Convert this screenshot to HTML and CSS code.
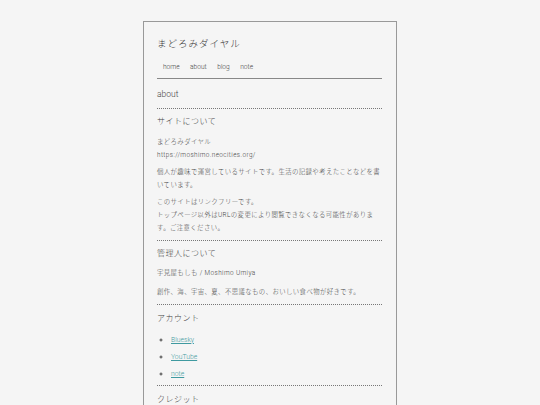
FILE: index.html
```html
<!DOCTYPE html>
<html lang="ja">
<head>
<meta charset="utf-8">
<title>まどろみダイヤル</title>
<link rel="stylesheet" href="styles.css">
</head>
<body>
<div class="page">
  <header class="site-header">
    <h1 class="site-title">まどろみダイヤル</h1>
    <nav class="nav">
      <a href="#">home</a>
      <a href="#">about</a>
      <a href="#">blog</a>
      <a href="#">note</a>
    </nav>
  </header>
  <main>
    <h2 class="page-title">about</h2>
    <section class="section">
      <h3 class="sec-title">サイトについて</h3>
      <p>まどろみダイヤル<br>https://moshimo.neocities.org/</p>
      <p>個人が趣味で運営しているサイトです。生活の記録や考えたことなどを書いています。</p>
      <p>このサイトはリンクフリーです。<br>トップページ以外はURLの変更により閲覧できなくなる可能性があります。ご注意ください。</p>
    </section>
    <section class="section">
      <h3 class="sec-title">管理人について</h3>
      <p>宇見屋もしも / Moshimo Umiya</p>
      <p class="wide">創作、海、宇宙、夏、不思議なもの、おいしい食べ物が好きです。</p>
    </section>
    <section class="section list-section">
      <h3 class="sec-title acc">アカウント</h3>
      <ul class="links">
        <li><a href="#">Bluesky</a></li>
        <li><a href="#">YouTube</a></li>
        <li><a href="#">note</a></li>
      </ul>
    </section>
    <section class="section">
      <h3 class="sec-title acc">クレジット</h3>
    </section>
  </main>
</div>
</body>
</html>
```
FILE: styles.css
```css
html, body {
  margin: 0;
  padding: 0;
  background: #f5f5f5;
}
body {
  font-family: "Roboto", "Noto Sans CJK JP", sans-serif;
  font-weight: 300;
  color: #444;
  padding-top: 21px;
}
.page {
  width: 225px;
  margin-left: 143px;
  border: 1px solid #999;
  border-bottom: none;
  padding: 0 14px 40px 13px;
  background: #f5f5f5;
}
.site-header {
  border-bottom: 1px solid #888;
  padding-top: 15px;
  padding-bottom: 6px;
}
.site-title {
  margin: 0;
  font-size: 9.5px;
  font-weight: 300;
  letter-spacing: 1px;
  line-height: 14px;
  color: #333;
}
.nav {
  display: flex;
  gap: 10.5px;
  padding-left: 6px;
  margin-top: 11px;
}
.nav a {
  font-size: 6.6px;
  color: #444;
  text-decoration: none;
  line-height: 10px;
}
.page-title {
  margin: 0;
  font-size: 8.5px;
  font-weight: 300;
  line-height: 12px;
  padding: 9px 0 8px;
  color: #444;
}
.section {
  border-top: 1px dotted #777;
  padding-bottom: 5px;
}
.section.list-section {
  padding-bottom: 4px;
}
.sec-title {
  margin: 0;
  font-size: 8px;
  font-weight: 300;
  letter-spacing: 0.5px;
  line-height: 12px;
  padding: 7px 0 3.5px;
  color: #444;
}
.sec-title.acc {
  padding-top: 8px;
}
.section p {
  margin: 4px 0 0;
  font-size: 6.4px;
  line-height: 13px;
  letter-spacing: 0.4px;
}
.section p.wide {
  margin-top: 6px;
}
.links {
  list-style: circle;
  margin: 5px 0 0;
  padding-left: 14px;
  font-size: 6.8px;
}
.links li {
  line-height: 13px;
  margin-bottom: 4px;
}
.links li:last-child {
  margin-bottom: 0;
}
.links a {
  color: #3f9aa0;
}
```
